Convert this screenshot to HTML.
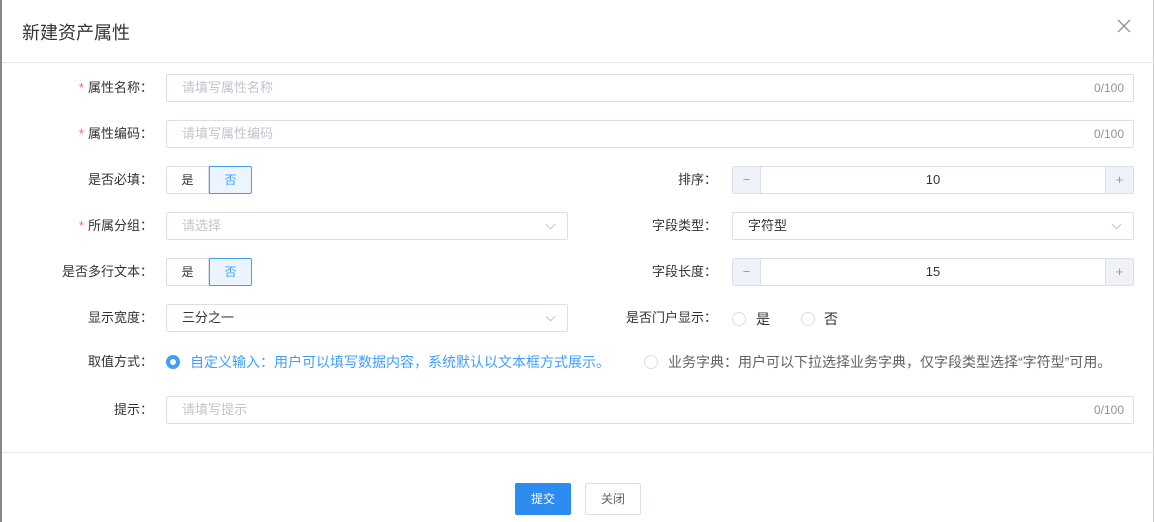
<!DOCTYPE html>
<html><head><meta charset="utf-8"><style>
*{box-sizing:border-box;margin:0;padding:0}
body{width:1154px;height:522px;background:#fff;font-family:"Liberation Sans","Noto Sans CJK SC",sans-serif;font-size:13px;color:#333;position:relative;overflow:hidden}
.edge{position:absolute;left:0;top:0;width:2px;height:522px;background:#888}
.edgeR{position:absolute;right:0;top:0;width:1px;height:522px;background:#ccc}
.title{position:absolute;left:22px;top:19px;font-size:18px;color:#333}
.x{position:absolute;left:1116px;top:18px;width:16px;height:16px}
.hl{position:absolute;left:2px;right:0;height:1px;background:#e8e8e8}
.lab{position:absolute;text-align:right;line-height:28px;color:#333;white-space:nowrap}
.lab i{color:#f56c6c;font-style:normal;margin-right:4px}
.inp{position:absolute;height:28px;border:1px solid #dcdfe6;border-radius:2px;line-height:26px;padding-left:15px;color:#333}
.ph{color:#c0c4cc}
.cnt{position:absolute;right:9px;top:0;font-size:12px;color:#909399}
.arrow{position:absolute;right:13px;top:8px;width:7px;height:7px;border-right:1px solid #c0c4cc;border-bottom:1px solid #c0c4cc;transform:rotate(45deg)}
.seg{position:absolute;height:28px;width:43px;border:1px solid #dcdfe6;text-align:center;line-height:26px;font-size:12px}
.seg.on{background:#ecf5ff;border-color:#409eff;color:#409eff}
.num{position:absolute;height:28px;border:1px solid #dcdfe6;border-radius:2px;text-align:center;line-height:26px;font-size:13px;color:#333}
.num .b{position:absolute;top:0;width:28px;height:26px;background:#f0f2f9;color:#999;line-height:26px}
.num .l{left:0;border-right:1px solid #dcdfe6}
.num .r{right:0;border-left:1px solid #dcdfe6}
.rad{position:absolute;width:14px;height:14px;border:1px solid #dcdfe6;border-radius:50%}
.rad.on{border:4px solid #409eff}
.t{position:absolute;line-height:20px;font-size:14px;white-space:nowrap}
.btn{position:absolute;top:483px;height:32px;width:56px;text-align:center;line-height:30px;font-size:12px;border-radius:2px}
</style></head><body>
<div class="edge"></div><div class="edgeR"></div>
<div class="title">新建资产属性</div>
<svg class="x" viewBox="0 0 16 16"><path d="M2 2L14 14M14 2L2 14" stroke="#909399" stroke-width="1.3"/></svg>
<div class="hl" style="top:62px"></div>

<div class="lab" style="left:20px;width:133px;top:74px"><i>*</i>属性名称：</div>
<div class="inp" style="left:166px;top:74px;width:968px"><span class="ph">请填写属性名称</span><span class="cnt">0/100</span></div>

<div class="lab" style="left:20px;width:133px;top:120px"><i>*</i>属性编码：</div>
<div class="inp" style="left:166px;top:120px;width:968px"><span class="ph">请填写属性编码</span><span class="cnt">0/100</span></div>

<div class="lab" style="left:20px;width:133px;top:166px">是否必填：</div>
<div class="seg" style="left:166px;top:166px;border-radius:2px 0 0 2px">是</div>
<div class="seg on" style="left:209px;top:166px;border-radius:0 2px 2px 0">否</div>
<div class="lab" style="left:580px;width:137px;top:166px">排序：</div>
<div class="num" style="left:732px;top:166px;width:402px"><span class="b l">−</span>10<span class="b r">+</span></div>

<div class="lab" style="left:20px;width:133px;top:212px"><i>*</i>所属分组：</div>
<div class="inp" style="left:166px;top:212px;width:402px"><span class="ph">请选择</span><span class="arrow"></span></div>
<div class="lab" style="left:580px;width:137px;top:212px">字段类型：</div>
<div class="inp" style="left:732px;top:212px;width:402px">字符型<span class="arrow"></span></div>

<div class="lab" style="left:20px;width:133px;top:258px">是否多行文本：</div>
<div class="seg" style="left:166px;top:258px;border-radius:2px 0 0 2px">是</div>
<div class="seg on" style="left:209px;top:258px;border-radius:0 2px 2px 0">否</div>
<div class="lab" style="left:580px;width:137px;top:258px">字段长度：</div>
<div class="num" style="left:732px;top:258px;width:402px"><span class="b l">−</span>15<span class="b r">+</span></div>

<div class="lab" style="left:20px;width:133px;top:304px">显示宽度：</div>
<div class="inp" style="left:166px;top:304px;width:402px">三分之一<span class="arrow"></span></div>
<div class="lab" style="left:580px;width:137px;top:304px">是否门户显示：</div>
<div class="rad" style="left:732px;top:312px"></div><div class="t" style="left:756px;top:309px">是</div>
<div class="rad" style="left:801px;top:312px"></div><div class="t" style="left:824px;top:309px">否</div>

<div class="lab" style="left:20px;width:133px;top:348px">取值方式：</div>
<div class="rad on" style="left:166px;top:355px"></div>
<div class="t" style="left:190px;top:352px;color:#409eff">自定义输入：用户可以填写数据内容，系统默认以文本框方式展示。</div>
<div class="rad" style="left:644px;top:355px"></div>
<div class="t" style="left:668px;top:352px;color:#606266">业务字典：用户可以下拉选择业务字典，仅字段类型选择“字符型”可用。</div>

<div class="lab" style="left:20px;width:133px;top:396px">提示：</div>
<div class="inp" style="left:166px;top:396px;width:968px"><span class="ph">请填写提示</span><span class="cnt">0/100</span></div>

<div class="hl" style="top:452px"></div>
<div class="btn" style="left:515px;background:#2d8cf0;color:#fff;border:1px solid #2d8cf0">提交</div>
<div class="btn" style="left:585px;border:1px solid #dcdfe6;color:#606266">关闭</div>
</body></html>
